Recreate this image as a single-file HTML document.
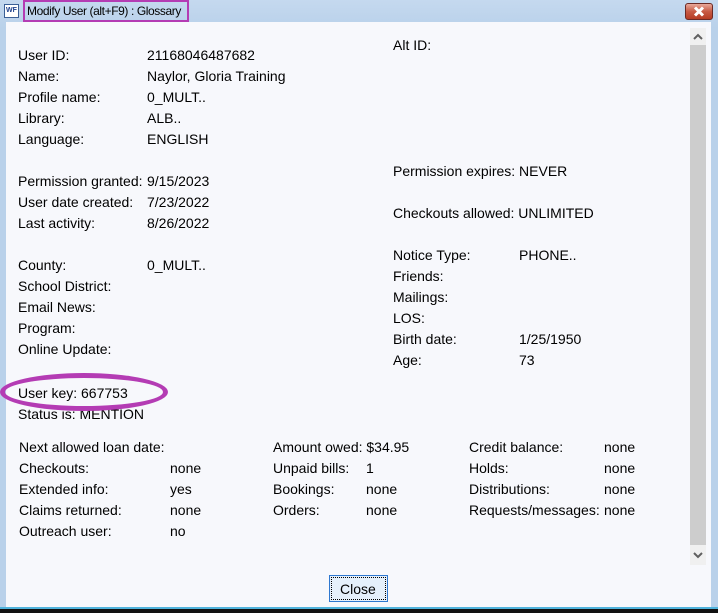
<!DOCTYPE html>
<html><head><meta charset="utf-8">
<style>
*{margin:0;padding:0;box-sizing:border-box}
body{width:718px;height:613px;overflow:hidden;background:#b9d1ea;font-family:"Liberation Sans",Arial,sans-serif;font-size:14px;color:#000;position:relative}
.title{position:absolute;left:0;top:0;width:718px;height:28px;background:linear-gradient(#c5d9ef,#b9d1ea)}
.content{position:absolute;left:6px;top:22px;width:705px;height:585px;background:#f7f8fc}
.bottom{position:absolute;left:0;top:607px;width:718px;height:2px;background:#4fb3dc}
.bottom2{position:absolute;left:0;top:609px;width:718px;height:4px;background:#111}
.t{position:absolute;white-space:nowrap;line-height:16px}
</style></head><body>
<div class="title"></div>
<div style="position:absolute;left:4px;top:4px;width:15px;height:14px;background:#fff;border:1px solid #3a5f96;font-size:7px;font-weight:bold;color:#1c3f8c;line-height:12px;text-align:center">WF</div>
<div style="position:absolute;left:23px;top:0;width:166px;height:22px;border:2px solid #b43cb4"></div>
<div class="t" style="left:27px;top:3px;font-size:12px;letter-spacing:-0.4px">Modify User (alt+F9) : Glossary</div>
<div style="position:absolute;left:685px;top:3px;width:28px;height:17px;border:1px solid #6b2a25;border-radius:3px;background:linear-gradient(#e9a99b,#c75a44 50%,#b63c24)">
<svg width="26" height="15" viewBox="0 0 26 15"><path d="M9 3.5L17 11.5M17 3.5L9 11.5" stroke="#fff" stroke-width="3"/></svg></div>
<div class="content"></div>
<div class="bottom"></div><div class="bottom2"></div>
<div style="position:absolute;left:690px;top:28px;width:16px;height:537px;background:#f0f0f0"></div>
<div style="position:absolute;left:690px;top:45px;width:16px;height:500px;background:#cdcdcd"></div>
<svg style="position:absolute;left:690px;top:31px" width="16" height="12"><path d="M4 8L8 4L12 8" stroke="#606060" stroke-width="2" fill="none"/></svg>
<svg style="position:absolute;left:690px;top:549px" width="16" height="12"><path d="M4 4L8 8L12 4" stroke="#606060" stroke-width="2" fill="none"/></svg>

<div class="t" style="left:18px;top:47px">User ID:</div><div class="t" style="left:147px;top:47px">21168046487682</div>
<div class="t" style="left:18px;top:68px">Name:</div><div class="t" style="left:147px;top:68px">Naylor, Gloria Training</div>
<div class="t" style="left:18px;top:89px">Profile name:</div><div class="t" style="left:147px;top:89px">0_MULT..</div>
<div class="t" style="left:18px;top:110px">Library:</div><div class="t" style="left:147px;top:110px">ALB..</div>
<div class="t" style="left:18px;top:131px">Language:</div><div class="t" style="left:147px;top:131px">ENGLISH</div>
<div class="t" style="left:18px;top:173px">Permission granted:</div><div class="t" style="left:147px;top:173px">9/15/2023</div>
<div class="t" style="left:18px;top:194px">User date created:</div><div class="t" style="left:147px;top:194px">7/23/2022</div>
<div class="t" style="left:18px;top:215px">Last activity:</div><div class="t" style="left:147px;top:215px">8/26/2022</div>
<div class="t" style="left:18px;top:257px">County:</div><div class="t" style="left:147px;top:257px">0_MULT..</div>
<div class="t" style="left:18px;top:278px">School District:</div>
<div class="t" style="left:18px;top:299px">Email News:</div>
<div class="t" style="left:18px;top:320px">Program:</div>
<div class="t" style="left:18px;top:341px">Online Update:</div>
<div class="t" style="left:18px;top:385px">User key: 667753</div>
<div class="t" style="left:18px;top:406px">Status is: MENTION</div>
<div style="position:absolute;left:0px;top:373px;width:168px;height:38px;border:5px solid #b43cb4;border-radius:50%"></div>

<div class="t" style="left:393px;top:37px">Alt ID:</div>
<div class="t" style="left:393px;top:163px">Permission expires: NEVER</div>
<div class="t" style="left:393px;top:205px">Checkouts allowed: UNLIMITED</div>
<div class="t" style="left:393px;top:247px">Notice Type:</div><div class="t" style="left:519px;top:247px">PHONE..</div>
<div class="t" style="left:393px;top:268px">Friends:</div>
<div class="t" style="left:393px;top:289px">Mailings:</div>
<div class="t" style="left:393px;top:310px">LOS:</div>
<div class="t" style="left:393px;top:331px">Birth date:</div><div class="t" style="left:519px;top:331px">1/25/1950</div>
<div class="t" style="left:393px;top:352px">Age:</div><div class="t" style="left:519px;top:352px">73</div>

<div class="t" style="left:19px;top:439px">Next allowed loan date:</div>
<div class="t" style="left:19px;top:460px">Checkouts:</div><div class="t" style="left:170px;top:460px">none</div>
<div class="t" style="left:19px;top:481px">Extended info:</div><div class="t" style="left:170px;top:481px">yes</div>
<div class="t" style="left:19px;top:502px">Claims returned:</div><div class="t" style="left:170px;top:502px">none</div>
<div class="t" style="left:19px;top:523px">Outreach user:</div><div class="t" style="left:170px;top:523px">no</div>

<div class="t" style="left:273px;top:439px">Amount owed: $34.95</div>
<div class="t" style="left:273px;top:460px">Unpaid bills:</div><div class="t" style="left:366px;top:460px">1</div>
<div class="t" style="left:273px;top:481px">Bookings:</div><div class="t" style="left:366px;top:481px">none</div>
<div class="t" style="left:273px;top:502px">Orders:</div><div class="t" style="left:366px;top:502px">none</div>

<div class="t" style="left:469px;top:439px">Credit balance:</div><div class="t" style="left:604px;top:439px">none</div>
<div class="t" style="left:469px;top:460px">Holds:</div><div class="t" style="left:604px;top:460px">none</div>
<div class="t" style="left:469px;top:481px">Distributions:</div><div class="t" style="left:604px;top:481px">none</div>
<div class="t" style="left:469px;top:502px">Requests/messages:</div><div class="t" style="left:604px;top:502px">none</div>

<div style="position:absolute;left:329px;top:575px;width:59px;height:27px;border:1px solid #2e78d0;background:#e5f0fb">
<div style="position:absolute;left:1px;top:1px;right:1px;bottom:1px;border:1px dotted #000"></div>
<div class="t" style="left:10px;top:5px;font-size:14px">Close</div></div>
</body></html>
